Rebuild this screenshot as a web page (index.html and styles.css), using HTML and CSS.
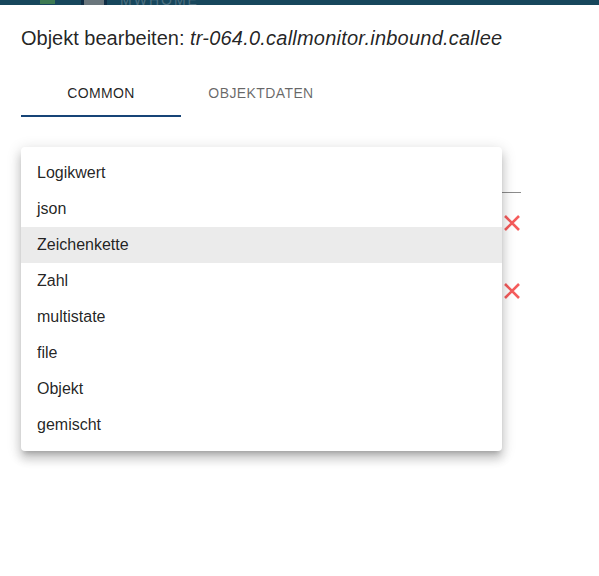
FILE: index.html
```html
<!DOCTYPE html>
<html lang="de">
<head>
<meta charset="utf-8">
<title>Objekt bearbeiten</title>
<link rel="stylesheet" href="styles.css">
</head>
<body>
<div class="topbar">
  <span class="tb-green"></span>
  <span class="tb-gray"></span>
  <span class="tb-text">MWHOME</span>
</div>
<div class="dialog">
  <h2 class="title">Objekt bearbeiten: <i>tr-064.0.callmonitor.inbound.callee</i></h2>
  <div class="tabs">
    <div class="tab active">Common</div>
    <div class="tab">Objektdaten</div>
  </div>
  <div class="form">
    <div class="field-row">
      <div class="select-field"></div>
    </div>
    <div class="icon-row">
      <svg class="x-icon" viewBox="0 0 16 16" width="16" height="16"><path d="M1 1 L15 15 M15 1 L1 15" stroke="#f55c5c" stroke-width="2.6" stroke-linecap="butt"/></svg>
    </div>
    <div class="icon-row second">
      <svg class="x-icon" viewBox="0 0 16 16" width="16" height="16"><path d="M1 1 L15 15 M15 1 L1 15" stroke="#f55c5c" stroke-width="2.6" stroke-linecap="butt"/></svg>
    </div>
  </div>
</div>
<ul class="menu">
  <li class="item">Logikwert</li>
  <li class="item">json</li>
  <li class="item selected">Zeichenkette</li>
  <li class="item">Zahl</li>
  <li class="item">multistate</li>
  <li class="item">file</li>
  <li class="item">Objekt</li>
  <li class="item">gemischt</li>
</ul>
</body>
</html>
```
FILE: styles.css
```css
html, body {
  margin: 0;
  padding: 0;
  background: #ffffff;
  font-family: "Liberation Sans", Arial, sans-serif;
  color: rgba(0, 0, 0, 0.87);
}

.topbar {
  height: 5px;
  background: #17475c;
  display: flex;
  align-items: flex-start;
  overflow: hidden;
}

.tb-green {
  width: 15px;
  height: 4px;
  margin-left: 40px;
  background: #3d7a52;
}

.tb-gray {
  width: 20px;
  height: 5px;
  margin-left: 26px;
  background: #6a767c;
  border-left: 3px solid #0f2d44;
  border-right: 3px solid #0f2d44;
}

.tb-text {
  margin-left: 13px;
  font-size: 14px;
  line-height: 10px;
  margin-top: -5px;
  letter-spacing: 2px;
  color: #4c6f80;
}

.dialog {
  padding: 0 21px;
}

.title {
  margin: 21px 0 0 0;
  font-size: 20px;
  line-height: 24px;
  font-weight: 400;
  color: rgba(0, 0, 0, 0.87);
  white-space: nowrap;
}

.title i {
  font-style: italic;
  letter-spacing: 0.22px;
}

.tabs {
  display: flex;
  margin-top: 19px;
}

.tab {
  width: 160px;
  height: 48px;
  display: flex;
  align-items: center;
  justify-content: center;
  font-size: 14px;
  text-transform: uppercase;
  letter-spacing: 0.4px;
  color: rgba(0, 0, 0, 0.6);
  box-sizing: border-box;
}

.tab.active {
  color: rgba(0, 0, 0, 0.87);
  border-bottom: 2px solid #164477;
  padding-top: 2px;
}

.form {
  width: 500px;
}

.field-row {
  height: 75px;
  box-sizing: border-box;
  padding-top: 43px;
}

.select-field {
  height: 32px;
  border-bottom: 1px solid #8c8c8c;
}

.icon-row {
  display: flex;
  justify-content: flex-end;
  padding-right: 1px;
  margin-top: 23px;
}

.icon-row.second {
  margin-top: 52px;
}

.x-icon {
  display: block;
}

.menu {
  position: absolute;
  left: 21px;
  top: 147px;
  width: 481px;
  margin: 0;
  padding: 8px 0;
  list-style: none;
  background: #ffffff;
  border-radius: 4px;
  box-shadow: 0px 5px 5px -3px rgba(0, 0, 0, 0.2),
              0px 8px 10px 1px rgba(0, 0, 0, 0.14),
              0px 3px 14px 2px rgba(0, 0, 0, 0.12);
}

.item {
  height: 36px;
  padding: 0 16px;
  display: flex;
  align-items: center;
  font-size: 16px;
  color: rgba(0, 0, 0, 0.87);
}

.item.selected {
  background: #ebebeb;
}
```
